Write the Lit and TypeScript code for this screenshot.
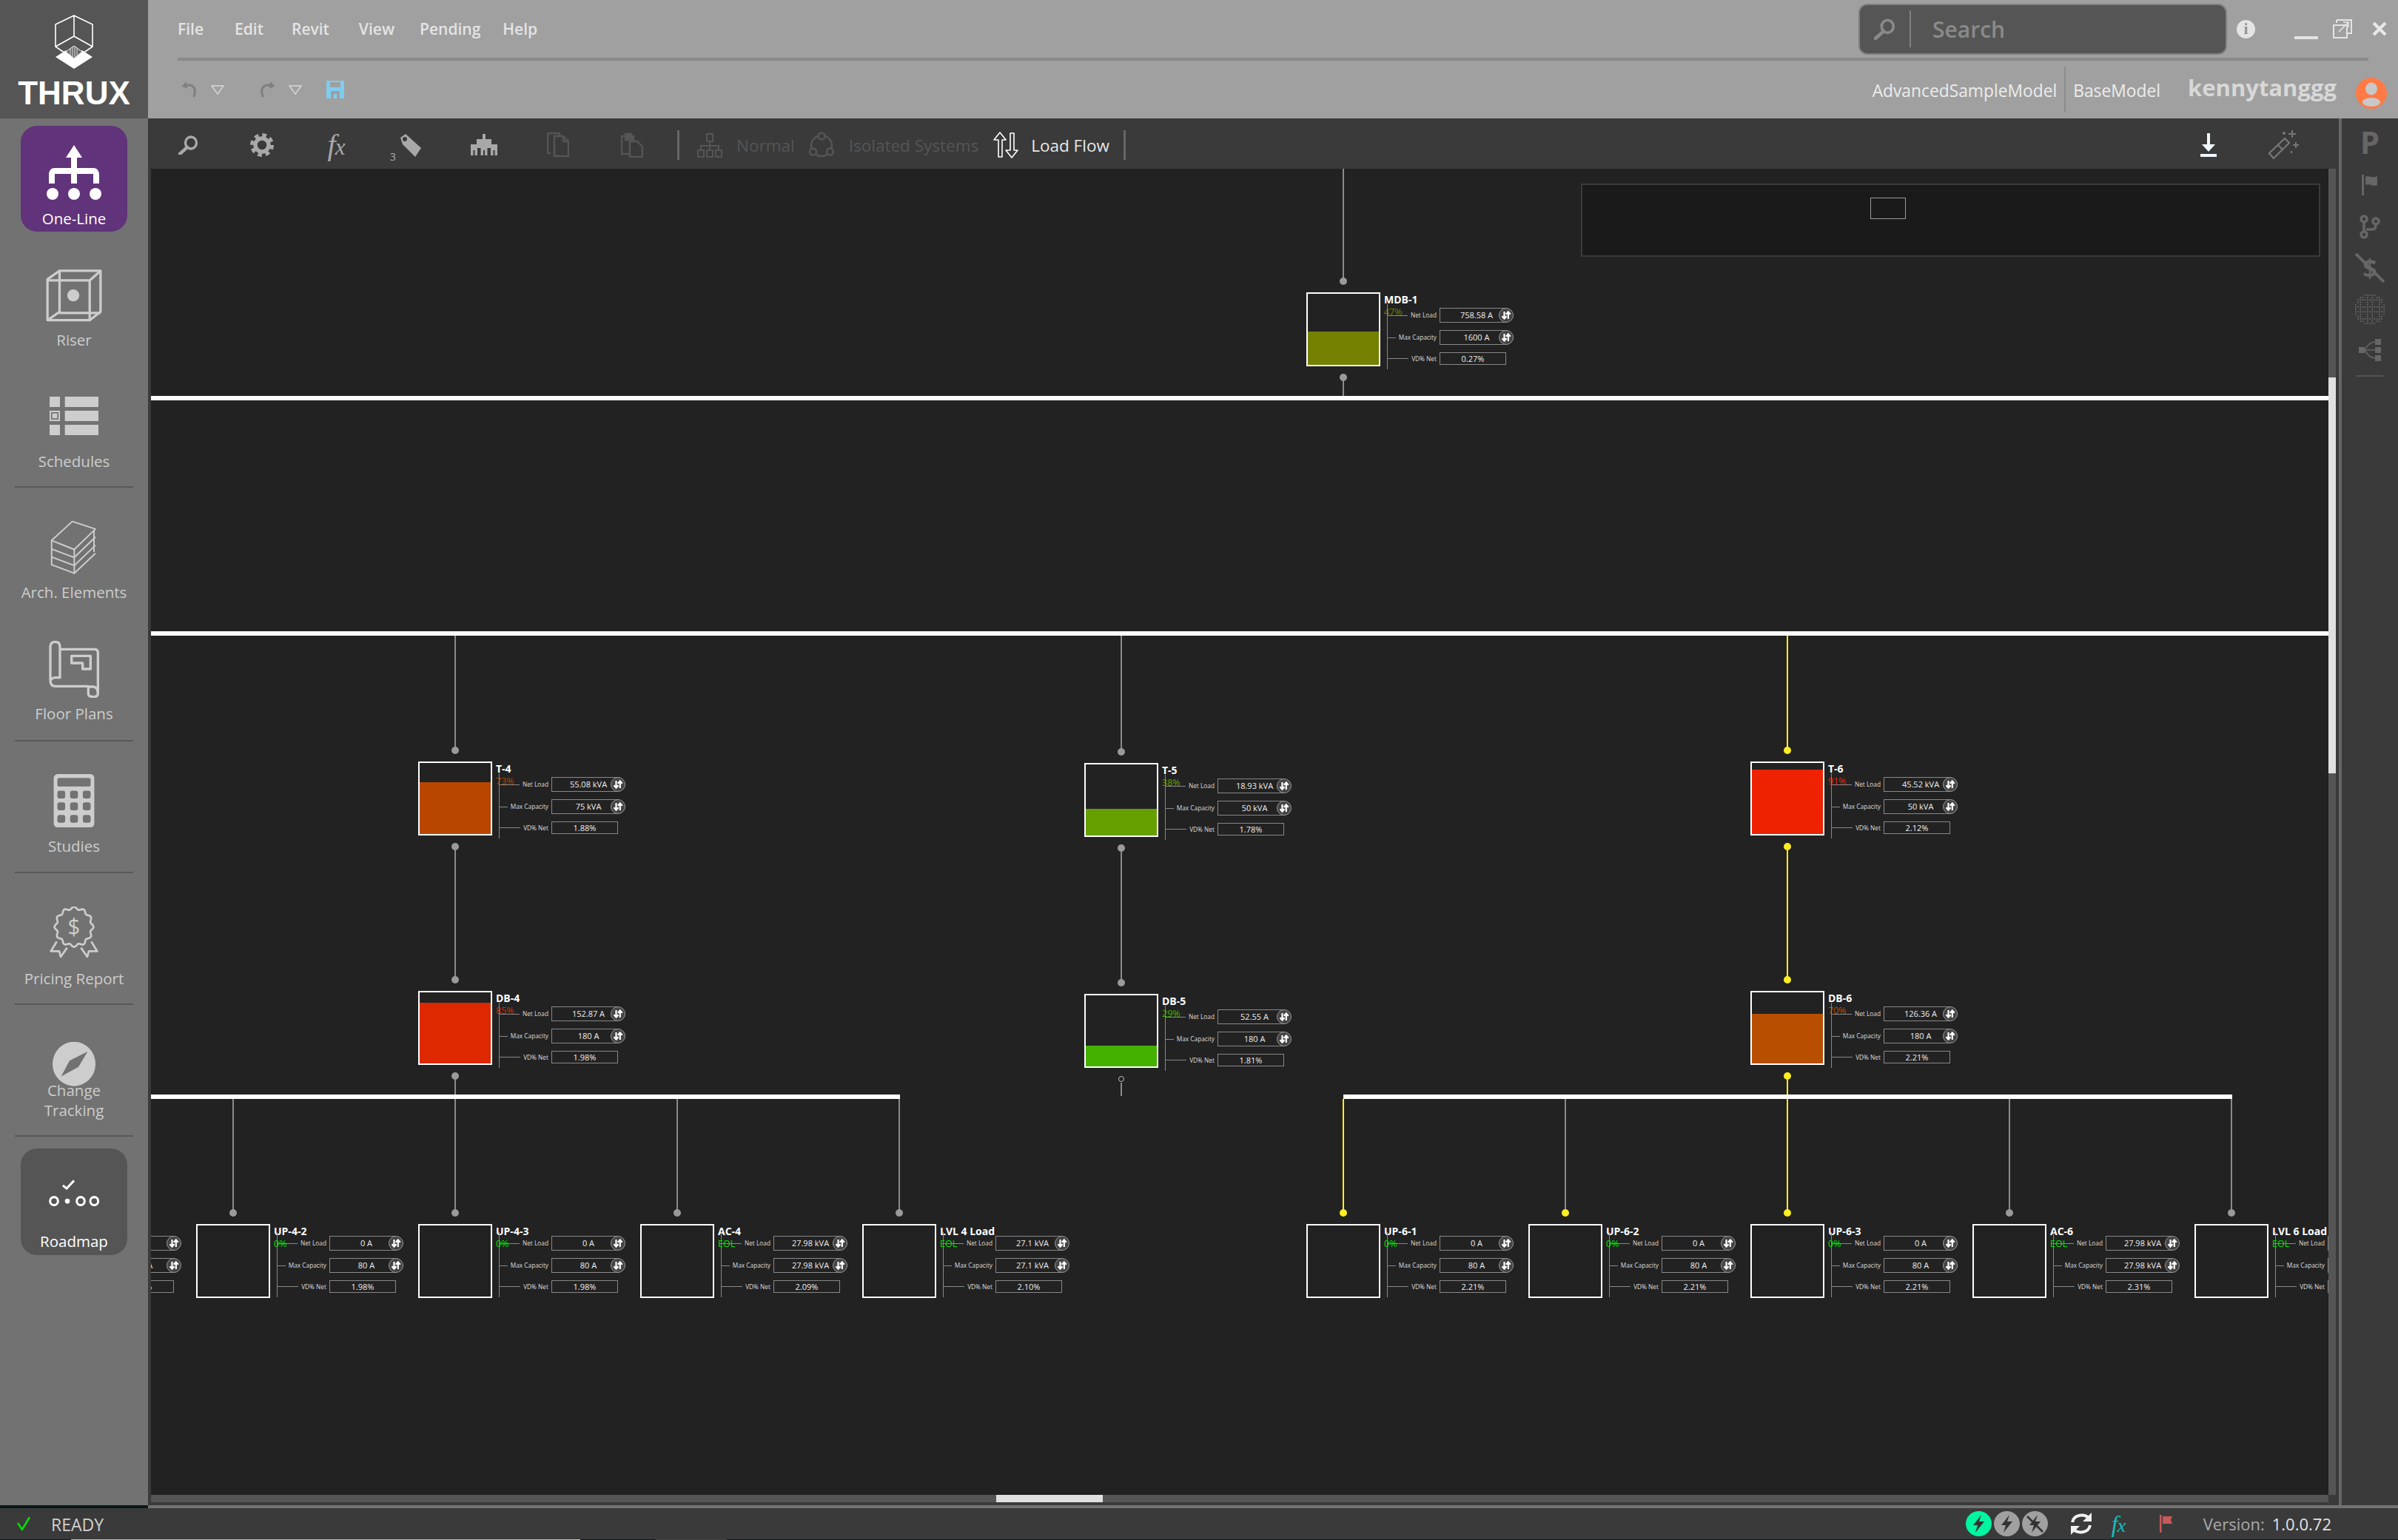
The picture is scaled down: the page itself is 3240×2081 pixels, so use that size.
import { LitElement, html, css, svg } from "lit";
import { customElement } from "lit/decorators.js";

const OX = 204;
const OY = 228;
const GRAY = "#8a8a8a";
const YEL = "#ffee22";
const LIME = "#00e000";

interface N { t: string; p: string; x: number; y: number; c: string; f: number; r: [string, string, string]; }

const up = (t: string, x: number, vd: string): N => ({ t, p: "0%", x, y: 1654, c: LIME, f: 0, r: ["0 A", "80 A", vd] });
const eol = (t: string, x: number, a: string, vd: string): N => ({ t, p: "EOL", x, y: 1654, c: LIME, f: 0, r: [a, a, vd] });

const NODES: N[] = [
  { t: "MDB-1", p: "47%", x: 1815, y: 395, c: "#738000", f: 47, r: ["758.58 A", "1600 A", "0.27%"] },
  { t: "T-4", p: "73%", x: 615, y: 1029, c: "#b84600", f: 73, r: ["55.08 kVA", "75 kVA", "1.88%"] },
  { t: "T-5", p: "38%", x: 1515, y: 1031, c: "#66a000", f: 38, r: ["18.93 kVA", "50 kVA", "1.78%"] },
  { t: "T-6", p: "91%", x: 2415, y: 1029, c: "#ee2200", f: 91, r: ["45.52 kVA", "50 kVA", "2.12%"] },
  { t: "DB-4", p: "85%", x: 615, y: 1339, c: "#dd2800", f: 85, r: ["152.87 A", "180 A", "1.98%"] },
  { t: "DB-5", p: "29%", x: 1515, y: 1343, c: "#44b000", f: 29, r: ["52.55 A", "180 A", "1.81%"] },
  { t: "DB-6", p: "70%", x: 2415, y: 1339, c: "#b84e00", f: 70, r: ["126.36 A", "180 A", "2.21%"] },
  up("UP-4-1", 15, "1.98%"),
  up("UP-4-2", 315, "1.98%"),
  up("UP-4-3", 615, "1.98%"),
  eol("AC-4", 915, "27.98 kVA", "2.09%"),
  eol("LVL 4 Load", 1215, "27.1 kVA", "2.10%"),
  up("UP-6-1", 1815, "2.21%"),
  up("UP-6-2", 2115, "2.21%"),
  up("UP-6-3", 2415, "2.21%"),
  eol("AC-6", 2715, "27.98 kVA", "2.31%"),
  eol("LVL 6 Load", 3015, "27.1 kVA", "2.32%"),
];

const WIRES: [number, number, number, string][] = [
  [1815, 228, 380, GRAY],
  [1815, 510, 535, GRAY],
  [615, 859, 1014, GRAY],
  [1515, 859, 1016, GRAY],
  [2415, 859, 1014, YEL],
  [615, 1144, 1324, GRAY],
  [1515, 1146, 1328, GRAY],
  [2415, 1144, 1324, YEL],
  [615, 1454, 1479, GRAY],
  [2415, 1454, 1479, YEL],
  [1515, 1463, 1481, GRAY],
  [315, 1485, 1639, GRAY],
  [615, 1485, 1639, GRAY],
  [915, 1485, 1639, GRAY],
  [1215, 1485, 1639, GRAY],
  [1815, 1485, 1639, YEL],
  [2115, 1485, 1639, GRAY],
  [2415, 1485, 1639, YEL],
  [2715, 1485, 1639, GRAY],
  [3015, 1485, 1639, GRAY],
];

const DOTS: [number, number, string][] = [
  [1815, 380, "#9a9a9a"], [1815, 510, "#9a9a9a"],
  [615, 1014, "#9a9a9a"], [1515, 1016, "#9a9a9a"], [2415, 1014, YEL],
  [615, 1144, "#9a9a9a"], [1515, 1146, "#9a9a9a"], [2415, 1144, YEL],
  [615, 1324, "#9a9a9a"], [1515, 1328, "#9a9a9a"], [2415, 1324, YEL],
  [615, 1454, "#9a9a9a"], [2415, 1454, YEL],
  [315, 1639, "#9a9a9a"], [615, 1639, "#9a9a9a"], [915, 1639, "#9a9a9a"], [1215, 1639, "#9a9a9a"],
  [1815, 1639, YEL], [2115, 1639, YEL], [2415, 1639, YEL], [2715, 1639, "#9a9a9a"], [3015, 1639, "#9a9a9a"],
];

const BUSES: [number, number, number][] = [
  [204, 3146, 535],
  [204, 3146, 853],
  [204, 1216, 1479],
  [1815, 3016, 1479],
];

function wavy(cx: number, cy: number, r: number, a: number, lobes: number) {
  const pts: string[] = [];
  for (let i = 0; i < 180; i++) {
    const th = (i / 180) * Math.PI * 2;
    const rr = r + a * Math.cos(lobes * th);
    pts.push(`${(cx + rr * Math.sin(th)).toFixed(1)} ${(cy - rr * Math.cos(th)).toFixed(1)}`);
  }
  return "M" + pts.join("L") + "Z";
}

function gridDots() {
  const out = [];
  const lines = [2, 5, 7, 10];
  for (let i = 0; i < 13; i++) {
    for (let j = 0; j < 13; j++) {
      const dx = i - 6, dy = j - 6;
      const d = Math.sqrt(dx * dx + dy * dy);
      if (d > 6.6) continue;
      const onLine = lines.includes(i) || lines.includes(j) || d > 5.6;
      if (onLine) out.push(svg`<rect x=${i * 3.2} y=${j * 3.2} width="1.8" height="1.8"></rect>`);
    }
  }
  return out;
}

const swapIcon = html`<svg class="swap" viewBox="0 0 14 14" width="14" height="14" fill="none" stroke="#fff" stroke-width="2.2"><path d="M4.5 2v9M1.5 8.2l3 3.3 3-3.3"></path><path d="M9.8 12V3M6.8 5.8l3-3.3 3 3.3"></path></svg>`;

const zoomGlass = (c: string, w: number, h: number) => html`<svg viewBox="0 0 28 26" width=${w} height=${h} fill="none" stroke=${c} stroke-width="3.4"><ellipse cx="18" cy="10" rx="7.5" ry="8"></ellipse><path d="M13 16L3 25" stroke-width="4.4" stroke-linecap="round"></path></svg>`;

@customElement("app-root")
export class AppRoot extends LitElement {
  static styles = css`
    :host { display: block; width: 3240px; height: 2081px; font-family: "Open Sans", "Noto Sans", sans-serif; overflow: hidden; background: #0a1a1a; }
    svg { display: block; flex: none; }
    .app { display: flex; flex-direction: column; width: 3240px; height: 2081px; }

    /* header */
    .header { display: flex; height: 160px; flex: none; }
    .logo { width: 200px; background: #555; display: flex; flex-direction: column; align-items: center; padding-top: 19px; box-sizing: border-box; }
    .logo-text { font-family: "Liberation Sans", sans-serif; font-weight: 700; font-size: 44px; line-height: 32px; color: #fff; margin-top: 15px; letter-spacing: 0; }
    .top { flex: 1; background: #a0a0a0; display: flex; flex-direction: column; padding: 0 40px; box-sizing: border-box; }
    .row1 { height: 78px; display: flex; align-items: center; flex: none; margin-right: -25px; }
    .menu { display: flex; font-size: 21px; font-weight: 600; color: #e4e4e4; }
    .menu span:nth-child(1) { margin-right: 42px; }
    .menu span:nth-child(2) { margin-right: 38px; }
    .menu span:nth-child(3) { margin-right: 40px; }
    .menu span:nth-child(4) { margin-right: 34px; }
    .menu span:nth-child(5) { margin-right: 30px; }
    .search { margin-left: auto; width: 498px; height: 69px; margin-right: 13px; box-sizing: border-box; border: 2px solid #808080; border-radius: 12px; background: #555; display: flex; align-items: center; padding-left: 18px; margin-top: 0; }
    .search .sep { width: 2px; height: 50px; background: #808080; margin-left: 19px; margin-right: 29px; }
    .search .txt { font-size: 30px; font-weight: 600; color: #8a8a8a; }
    .info-i { width: 25px; height: 25px; border-radius: 50%; background: #e4e4e4; color: #909090; font: 700 20px/25px "Liberation Serif", serif; text-align: center; margin-right: 53px; }
    .min { width: 32px; height: 4px; background: #e4e4e4; margin-top: 24px; margin-right: 20px; }
    .rest { margin-right: 27px; margin-top: 0; }
    .divider { height: 4px; background: #8a8a8a; flex: none; }
    .row2 { flex: 1; display: flex; align-items: flex-start; position: relative; }
    .undo { display: flex; align-items: center; margin-top: 27px; margin-left: 3px; }
    .tri { margin-left: 15px; }
    .redo { margin-left: 44px; }
    .save { margin-left: 32px; }
    .models { margin-left: auto; display: flex; align-items: center; height: 62px; margin-top: 8px; font-size: 22.8px; color: #ececec; }
    .models .bar { width: 2px; height: 62px; background: #8c8c8c; margin: 0 10px; }
    .models .nm { padding-bottom: 0; line-height: 34px; margin-top: 4px; }
    .user { font-size: 31px; font-weight: 700; color: #d8d8d8; margin: 0 26px 0 37px; line-height: 40px; padding-bottom: 6px; }
    .avatar { margin-right: -25px; margin-top: 10px; }

    /* main */
    .main { flex: 1; display: flex; min-height: 0; }
    .side { width: 200px; background: #727272; display: flex; flex-direction: column; align-items: center; flex: none; color: #cdcdcd; }
    .item { width: 100%; display: flex; flex-direction: column; align-items: center; box-sizing: border-box; flex: none; }
    .lbl { font-size: 20.5px; line-height: 30px; white-space: nowrap; text-align: center; }
    .rule { width: 160px; height: 2px; background: #585858; flex: none; }
    .tile { width: 144px; border-radius: 22px; color: #fff; }
    .n-one { background: #60337a; margin-top: 10px; height: 143px; padding-top: 26px; }
    .n-one .lbl { margin-top: 10px; }
    .n-riser { padding-top: 50px; } .n-riser .lbl { margin-top: 8px; }
    .n-sched { padding-top: 62px; } .n-sched .lbl { margin-top: 20px; }
    .r1 { margin-top: 19px; }
    .n-arch { padding-top: 44px; } .n-arch .lbl { margin-top: 9px; }
    .n-floor { padding-top: 50px; } .n-floor .lbl { margin-top: 6px; }
    .r2 { margin-top: 21px; }
    .n-stud { padding-top: 44px; } .n-stud .lbl { margin-top: 10px; }
    .r3 { margin-top: 20px; }
    .n-price { padding-top: 45px; } .n-price .lbl { margin-top: 11.5px; }
    .r4 { margin-top: 19.5px; }
    .n-change { padding-top: 50px; } .n-change .lbl { margin-top: -8.5px; line-height: 27px; }
    .r5 { margin-top: 20.5px; }
    .n-road { background: #555; margin-top: 15.5px; height: 144px; padding-top: 42.5px; }
    .n-road .lbl { margin-top: 28px; }

    .center { width: 2960px; flex: none; background: #3a3a3a; display: flex; flex-direction: column; }
    .toolbar { height: 68px; flex: none; display: flex; align-items: center; padding-left: 4px; padding-right: 54px; padding-top: 4px; box-sizing: border-box; color: #555; font-size: 22.5px; }
    .cell { width: 100px; height: 64px; display: flex; align-items: center; justify-content: center; position: relative; flex: none; }
    .fx { font: italic 40px/1 "Liberation Serif", serif; color: #a8a8a8; letter-spacing: -1px; }
    .fx .sx { font-size: 31px; }
    .tag3 { position: absolute; left: 23px; bottom: 9px; font-size: 14px; line-height: 14px; color: #aaa; }
    .vsep { width: 3px; height: 40px; background: #666; flex: none; }
    .vs1 { margin-left: 11px; margin-right: 24px; }
    .t1 { margin-left: 19px; margin-right: 19px; }
    .t2 { margin-left: 20px; margin-right: 19px; }
    .t3 { margin-left: 16px; margin-right: 19px; color: #e8e8e8; }
    .dl { margin-left: auto; margin-right: 69px; }

    .mid { flex: 1; display: flex; padding-left: 4px; min-height: 0; }
    .canvas { width: 2942px; flex: none; background: #222; position: relative; overflow: hidden; }
    .vtrack { width: 10px; flex: none; background: #555; padding-top: 282px; box-sizing: border-box; }
    .vthumb { height: 535px; background: #e0e0e0; }
    .htrack { height: 10px; margin-left: 4px; width: 2942px; background: #555; flex: none; padding-left: 1142px; box-sizing: border-box; }
    .hthumb { width: 144px; height: 10px; background: #e0e0e0; }
    .hgap { height: 4px; flex: none; }

    .panel { flex: 1; border-left: 4px solid #666; background: #3a3a3a; display: flex; flex-direction: column; align-items: center; color: #666; box-sizing: border-box; }
    .p { font: 700 42px/40px "Open Sans", sans-serif; height: 40px; margin-top: 12px; margin-left: 0; }
    .nodollar { position: relative; width: 40px; height: 40px; display: flex; align-items: center; justify-content: center; font: 700 34px/40px "Open Sans", sans-serif; margin-top: 19px; }
    .nodollar svg { position: absolute; left: 0; top: 0; }
    .pf { margin-top: 24px; }
    .pb { margin-top: 26px; }
    .pg { margin-top: 16px; }
    .pt { margin-top: 20px; }
    .pr { width: 36px; height: 2px; background: #555; margin-top: 19px; }

    .hline { height: 4px; background: #727272; margin-left: 200px; flex: none; }

    /* status */
    .status { height: 42px; flex: none; background: #3a3a3a; display: flex; align-items: center; padding-left: 21px; font-size: 22px; color: #d0d0d0; }
    .ready { margin-left: 26px; font-size: 23px; padding-top: 2px; }
    .bolts { margin-left: auto; display: flex; gap: 3px; }
    .sync { margin-left: 30px; }
    .sfx { font: italic 32px/1 "Liberation Serif", serif; color: #10c0c0; margin-left: 26px; width: 24px; letter-spacing: -1px; }
    .sfx .sx { font-size: 26px; }
    .sflag { margin-left: 41px; }
    .ver { margin-left: 41px; color: #aaa; }
    .ver b { font-weight: 400; color: #e4e4e4; margin-left: 10px; }
    .endgap { width: 90px; flex: none; }
    .foot { height: 1px; flex: none; display: flex; }
    .f1 { width: 96px; } .f2 { width: 688px; background: #bbb; } .f3 { width: 102px; } .f4 { width: 96px; background: #444; }

    /* diagram */
    .bus { position: absolute; height: 6px; background: #fff; }
    .wire { position: absolute; width: 2px; }
    .dot { position: absolute; width: 10px; height: 10px; border-radius: 50%; }
    .ring { position: absolute; width: 8px; height: 8px; border-radius: 50%; border: 1px solid #bbb; box-sizing: border-box; }
    .mini { position: absolute; box-sizing: border-box; left: 1932px; top: 20px; width: 999px; height: 99px; background: #1a1a1a; border: 2px solid #3a3a3a; display: flex; justify-content: center; }
    .mini div { width: 48px; height: 29px; border: 1px solid #999; box-sizing: border-box; margin-top: 17px; margin-left: -170px; }
    .node { position: absolute; display: flex; width: 280px; height: 110px; color: #eee; }
    .box { width: 100px; height: 100px; box-sizing: border-box; border: 2px solid #fff; display: flex; align-items: flex-end; flex: none; background: #222; }
    .fill { width: 100%; }
    .info { position: relative; width: 180px; }
    .title { position: absolute; left: 5px; top: 2px; font-size: 14px; line-height: 16px; font-weight: 700; color: #fff; white-space: nowrap; }
    .pct { position: absolute; left: 5px; top: 19px; font-size: 12.5px; line-height: 16px; }
    .spine { position: absolute; left: 9px; top: 16px; width: 1px; height: 88px; background: #888; }
    .rows { position: absolute; left: 10px; top: 21px; width: 160px; display: flex; flex-direction: column; gap: 10px; }
    .low .rows { top: 16px; }
    .low .spine { top: 11px; }
    .row { display: flex; align-items: center; height: 20px; }
    .row.last { height: 17px; }
    .stub { flex: 1; height: 1px; background: #888; margin-right: 4px; }
    .rl { font-size: 8.3px; line-height: 10px; color: #ddd; white-space: nowrap; margin-right: 4px; }
    .val { width: 90px; height: 100%; flex: none; box-sizing: border-box; border: 1px solid #888; position: relative; font-size: 11px; line-height: 18px; text-align: center; background: #222; white-space: nowrap; }
    .row.last .val { line-height: 15px; }
    .val.btn { padding-left: 10px; }
    .circ { position: absolute; right: -11px; top: -1px; width: 20px; height: 20px; box-sizing: border-box; border: 1px solid #999; border-radius: 50%; background: #444; display: flex; align-items: center; justify-content: center; }
  `;

  private node(n: N) {
    const labels = ["Net Load", "Max Capacity", "VD% Net"];
    return html`<div class="node ${n.y === 1654 ? "low" : ""}" style="left:${n.x - 50 - OX}px;top:${n.y - OY}px">
      <div class="box">${n.f ? html`<div class="fill" style="height:${n.f}%;background:${n.c}"></div>` : ""}</div>
      <div class="info">
        <div class="title">${n.t}</div>
        <div class="pct" style="color:${n.c}">${n.p}</div>
        <div class="spine"></div>
        <div class="rows">
          ${labels.map((l, i) => html`<div class="row ${i === 2 ? "last" : ""}">
            <div class="stub"></div><div class="rl">${l}</div>
            <div class="val ${i < 2 ? "btn" : ""}">${n.r[i]}${i < 2 ? html`<div class="circ">${swapIcon}</div>` : ""}</div>
          </div>`)}
        </div>
      </div>
    </div>`;
  }

  render() {
    return html`<div class="app">
      <div class="header">
        <div class="logo">
          <svg width="60" height="76" viewBox="70 19 60 76">
            <path d="M100 21L125 33V63L100 80L75 63V33Z M100 21V50 M75 63L100 49L125 63" fill="none" stroke="#fff" stroke-width="1.6"></path>
            <path d="M75 77L89 68L100 80L111 68L125 77L100 93Z" fill="#fff"></path>
            <path d="M100 62L111 70L100 79L89 70Z" fill="#666" stroke="#fff" stroke-width="1"></path>
            <path d="M95 65V75M98 63V77M101 63V77M104 65V75" stroke="#ddd" stroke-width="1"></path>
          </svg>
          <div class="logo-text">THRUX</div>
        </div>
        <div class="top">
          <div class="row1">
            <div class="menu"><span>File</span><span>Edit</span><span>Revit</span><span>View</span><span>Pending</span><span>Help</span></div>
            <div class="search">
              ${zoomGlass("#8a8a8a", 30, 32)}
              <div class="sep"></div>
              <div class="txt">Search</div>
            </div>
            <div class="info-i">i</div>
            <div class="min"></div>
            <svg class="rest" viewBox="0 0 26 26" width="26" height="26" fill="none" stroke="#e4e4e4" stroke-width="2"><path d="M5 1H25V19H20"></path><path d="M5 1V5" ></path><rect x="1" y="8" width="18" height="17"></rect><path d="M8 17L21 4M14 4H21V11" stroke-width="1.6"></path></svg>
            <svg viewBox="0 0 20 20" width="20" height="20" fill="none" stroke="#e8e8e8" stroke-width="4.2"><path d="M2 2L18 18M18 2L2 18"></path></svg>
          </div>
          <div class="divider"></div>
          <div class="row2">
            <div class="undo">
              <svg viewBox="0 0 26 26" width="26" height="24" fill="none" stroke="#808080" stroke-width="3.4"><path d="M4 8C14 4 21 8 21 15C21 19 20 22 19 24"></path><path d="M8 1L2 8L10 12" fill="#808080" stroke="none"></path></svg>
              <svg class="tri" viewBox="0 0 20 14" width="20" height="13" fill="none" stroke="#d8d8d8" stroke-width="1.6"><path d="M1.5 1H18.5L10 13Z"></path></svg>
              <svg class="redo" viewBox="0 0 26 26" width="26" height="24" fill="none" stroke="#808080" stroke-width="3.4"><path d="M22 8C12 4 5 8 5 15C5 19 6 22 7 24"></path><path d="M18 1L24 8L16 12" fill="#808080" stroke="none"></path></svg>
              <svg class="tri" viewBox="0 0 20 14" width="20" height="13" fill="none" stroke="#d8d8d8" stroke-width="1.6"><path d="M1.5 1H18.5L10 13Z"></path></svg>
              <svg class="save" viewBox="0 0 24 24" width="24" height="24"><path d="M0 0H24V24H0Z" fill="#7ecdf0"></path><rect x="5" y="2" width="14" height="7" fill="#a0a0a0"></rect><rect x="6" y="14" width="12" height="10" fill="#a0a0a0"></rect><rect x="10" y="18" width="4" height="6" fill="#7ecdf0"></rect></svg>
            </div>
            <div class="models">
              <div class="nm">AdvancedSampleModel</div><div class="bar"></div><div class="nm">BaseModel</div>
              <div class="user">kennytanggg</div>
              <svg class="avatar" viewBox="0 0 42 42" width="42" height="42"><circle cx="21" cy="21" r="21" fill="#ff7a45"></circle><ellipse cx="21" cy="15" rx="8" ry="8.5" fill="#c8c8c8"></ellipse><ellipse cx="21" cy="33" rx="12" ry="6" fill="#c8c8c8"></ellipse></svg>
            </div>
          </div>
        </div>
      </div>

      <div class="main">
        <nav class="side">
          <div class="item tile n-one">
            <svg width="76" height="74" viewBox="62 196 76 74" fill="#fff">
              <path d="M100 196L111 213H104V227H126C132 227 134 232 134 236V248H126V235H104V248H96V235H74V248H66V236C66 232 68 227 74 227H96V213H89Z"></path>
              <circle cx="71" cy="262" r="8"></circle><circle cx="100" cy="262" r="8"></circle><circle cx="129" cy="262" r="8"></circle>
            </svg>
            <div class="lbl">One-Line</div>
          </div>
          <div class="item n-riser">
            <svg width="80" height="73" viewBox="190 636 240 224" fill="none" stroke="#cdcdcd" stroke-width="10" stroke-linejoin="round">
              <path d="M200 680L250 645H420V815L375 850H200Z"></path>
              <path d="M200 685H375V850M375 685L420 645M250 645V820H420M200 850L250 815"></path>
              <circle cx="307" cy="747" r="25" fill="#cdcdcd" stroke="none"></circle>
            </svg>
            <div class="lbl">Riser</div>
          </div>
          <div class="item n-sched">
            <svg width="70" height="52" viewBox="195 1158 210 156" fill="#cdcdcd">
              <rect x="201" y="1158" width="42" height="42"></rect><rect x="263" y="1158" width="136" height="42"></rect>
              <rect x="204" y="1218" width="36" height="36" fill="none" stroke="#cdcdcd" stroke-width="6"></rect><rect x="212" y="1226" width="20" height="20"></rect><rect x="263" y="1215" width="136" height="42"></rect>
              <rect x="201" y="1272" width="42" height="42"></rect><rect x="263" y="1272" width="136" height="42"></rect>
            </svg>
            <div class="lbl">Schedules</div>
          </div>
          <div class="rule r1"></div>
          <div class="item n-arch">
            <svg width="66" height="73" viewBox="203 97 198 222" fill="none" stroke="#cdcdcd" stroke-width="6" stroke-linejoin="round">
              <path d="M210 180L295 102L390 133L303 217Z"></path>
              <path d="M210 180V280L303 315V217M210 215L303 250M210 248L303 283"></path>
              <path d="M303 250L390 166M303 283L390 200M303 315L390 233M384 140V228"></path>
            </svg>
            <div class="lbl">Arch. Elements</div>
          </div>
          <div class="item n-floor">
            <svg width="72" height="78" viewBox="192 583 216 234" fill="none" stroke="#cdcdcd" stroke-width="10" stroke-linejoin="round">
              <path d="M245 620H385Q397 620 397 635V800Q397 813 378 813Q358 813 358 800V770H225Q204 770 204 745V610Q204 590 224 590Q243 590 243 610V735H225Q208 735 204 750"></path>
              <path d="M358 772H380Q397 775 397 800"></path>
              <path d="M290 647H367V700H335V676H290Z"></path>
            </svg>
            <div class="lbl">Floor Plans</div>
          </div>
          <div class="rule r2"></div>
          <div class="item n-stud">
            <svg width="56" height="72" viewBox="217 1127 166 218">
              <rect x="217" y="1127" width="166" height="218" rx="16" fill="#cdcdcd"></rect>
              <rect x="232" y="1143" width="136" height="35" rx="8" fill="#727272"></rect>
              ${[1195, 1243, 1294].map((y) => [232, 284, 336].map((x) => svg`<rect x=${x} y=${y} width="32" height="32" rx="9" fill="#727272"></rect>`))}
            </svg>
            <div class="lbl">Studies</div>
          </div>
          <div class="rule r3"></div>
          <div class="item n-price">
            <svg width="68" height="70" viewBox="198 160 204 204" preserveAspectRatio="none" fill="none" stroke="#cdcdcd" stroke-width="8" stroke-linejoin="round">
              <path d="${wavy(300, 240, 74, 5, 12)}"></path>
              <path d="M230 298L206 336L240 336L246 358L272 322M370 298L394 336L360 336L354 358L328 322"></path>
              <text x="300" y="272" font-size="88" font-weight="400" font-family="Open Sans, sans-serif" text-anchor="middle" fill="#cdcdcd" stroke="none">$</text>
            </svg>
            <div class="lbl">Pricing Report</div>
          </div>
          <div class="rule r4"></div>
          <div class="item n-change">
            <svg width="60" height="60" viewBox="210 692 180 174" preserveAspectRatio="none">
              <circle cx="300" cy="778" r="87" fill="#cdcdcd"></circle>
              <path d="M355 730L318 790L248 827L282 765Z" fill="#727272"></path>
            </svg>
            <div class="lbl">Change<br />Tracking</div>
          </div>
          <div class="rule r5"></div>
          <div class="item tile n-road">
            <svg width="72" height="40" viewBox="192 1232 216 117" preserveAspectRatio="none" fill="none" stroke="#fff" stroke-width="9">
              <path d="M255 1255L270 1267L300 1236"></path>
              <circle cx="219" cy="1317" r="16"></circle>
              <circle cx="273" cy="1317" r="10" fill="#fff" stroke="none"></circle>
              <circle cx="327" cy="1317" r="16"></circle>
              <circle cx="382" cy="1317" r="16"></circle>
            </svg>
            <div class="lbl">Roadmap</div>
          </div>
        </nav>

        <div class="center">
          <div class="toolbar">
            <div class="cell">${zoomGlass("#a8a8a8", 28, 26)}</div>
            <div class="cell">
              <svg viewBox="0 0 32 32" width="32" height="32" fill="none" stroke="#a8a8a8"><circle cx="16" cy="16" r="9" stroke-width="5.5"></circle><circle cx="16" cy="16" r="13.5" stroke-width="5" stroke-dasharray="5.6 5"></circle></svg>
            </div>
            <div class="cell"><span class="fx">f<span class="sx">x</span></span></div>
            <div class="cell">
              <svg viewBox="0 0 32 32" width="32" height="32"><path d="M3 6L10 1L31 20L23 32L6 15Z" fill="#a8a8a8"></path><circle cx="9" cy="8" r="3" fill="#3a3a3a"></circle></svg>
              <span class="tag3">3</span>
            </div>
            <div class="cell">
              <svg viewBox="0 0 36 30" width="36" height="30" fill="#a8a8a8"><rect x="16" y="0" width="4" height="8"></rect><rect x="8" y="7" width="20" height="7"></rect><rect x="0" y="14" width="36" height="5"></rect><rect x="0" y="18" width="9" height="11"></rect><rect x="13.500" y="18" width="9" height="11"></rect><rect x="27" y="18" width="9" height="11"></rect><rect x="3.500" y="22" width="2" height="7" fill="#3a3a3a"></rect><rect x="17" y="22" width="2" height="7" fill="#3a3a3a"></rect><rect x="30.500" y="22" width="2" height="7" fill="#3a3a3a"></rect></svg>
            </div>
            <div class="cell">
              <svg viewBox="0 0 30 34" width="30" height="34" fill="none" stroke="#555" stroke-width="2.4"><path d="M10 5V32H29V12L22 5Z"></path><path d="M5 28H1V1H17V5"></path><path d="M22 5V12H29"></path></svg>
            </div>
            <div class="cell">
              <svg viewBox="0 0 30 34" width="30" height="34" fill="none" stroke="#555" stroke-width="2.4"><path d="M6 5H1V29H12"></path><path d="M6 5V2H14V5H17V10H6Z" fill="#555"></path><path d="M12 12H22L29 19V33H12Z"></path></svg>
            </div>
            <div class="vsep vs1"></div>
            <svg viewBox="0 0 34 33" width="34" height="33" fill="none" stroke="#555" stroke-width="2"><rect x="13" y="1" width="8" height="10"></rect><path d="M17 11V23M5 23V17H29V23"></path><rect x="1" y="23" width="8" height="9"></rect><rect x="13" y="23" width="8" height="9"></rect><rect x="25" y="23" width="8" height="9"></rect></svg>
            <span class="t1">Normal</span>
            <svg viewBox="0 0 34 36" width="34" height="36" fill="none" stroke="#555" stroke-width="2.6"><circle cx="17" cy="19" r="14"></circle><circle cx="17" cy="6" r="4.5" fill="#3a3a3a"></circle><circle cx="5.500" cy="27" r="4.500" fill="#3a3a3a"></circle><circle cx="28.500" cy="27" r="4.500" fill="#3a3a3a"></circle></svg>
            <span class="t2">Isolated Systems</span>
            <svg viewBox="0 0 36 36" width="36" height="36" fill="none" stroke="#fff" stroke-width="1.6" stroke-linejoin="round"><path d="M10 1L18 11H13V34H8V11H2Z"></path><path d="M26 35L34 25H29V2H24V25H18Z"></path></svg>
            <span class="t3">Load Flow</span>
            <div class="vsep"></div>
            <svg class="dl" viewBox="0 0 22 32" width="22" height="32" fill="#f0f8ff"><path d="M9 0H13V15H20L11 25L2 15H9Z"></path><rect x="0" y="28" width="22" height="4"></rect></svg>
            <svg viewBox="0 0 42 40" width="42" height="40" fill="none" stroke="#777" stroke-width="2.2"><path d="M2 31L23 11L29 17L8 38Z"></path><path d="M14 20L20 26"></path><path d="M33 0V10M28 5H38M38 16V24M34 20H42M22 2V6M20 4H24M32 28V31" stroke-width="2"></path></svg>
          </div>
          <div class="mid">
            <div class="canvas">
              <div class="mini"><div></div></div>
              ${BUSES.map(([a, b, y]) => html`<div class="bus" style="left:${a - OX}px;top:${y - OY}px;width:${b - a}px"></div>`)}
              ${WIRES.map(([x, a, b, c]) => html`<div class="wire" style="left:${x - 1 - OX}px;top:${a - OY}px;height:${b - a}px;background:${c}"></div>`)}
              ${DOTS.map(([x, y, c]) => html`<div class="dot" style="left:${x - 5 - OX}px;top:${y - 5 - OY}px;background:${c}"></div>`)}
              <div class="ring" style="left:${1515 - 4 - OX}px;top:${1458 - 4 - OY}px"></div>
              ${NODES.map((n) => this.node(n))}
            </div>
            <div class="vtrack"><div class="vthumb"></div></div>
          </div>
          <div class="htrack"><div class="hthumb"></div></div>
          <div class="hgap"></div>
        </div>

        <aside class="panel">
          <div class="p">P</div>
          <svg class="pf" viewBox="0 0 22 28" width="22" height="28" fill="#666"><rect x="0" y="0" width="3" height="28"></rect><path d="M5 3C9 0 14 6 21 2V14C15 17 10 11 5 14Z"></path></svg>
          <svg class="pb" viewBox="0 0 28 33" width="28" height="33" fill="none" stroke="#666" stroke-width="3.6"><circle cx="6" cy="6" r="4"></circle><circle cx="6" cy="27" r="4"></circle><circle cx="22" cy="9" r="4"></circle><path d="M6 10V23M9 20H18Q22 20 22 13"></path></svg>
          <div class="nodollar">$<svg viewBox="0 0 40 40" width="40" height="40" stroke="#666" stroke-width="4"><path d="M1 1L39 39"></path></svg></div>
          <svg class="pg" viewBox="0 0 40 40" width="40" height="40" fill="#666">${gridDots()}</svg>
          <svg class="pt" viewBox="0 0 30 30" width="30" height="30" fill="#666" stroke="none"><rect x="0" y="11" width="8" height="8"></rect><rect x="22" y="0" width="8" height="8"></rect><rect x="22" y="11" width="8" height="8"></rect><rect x="22" y="22" width="8" height="8"></rect><path d="M8 15H22M8 15Q14 4 22 4M8 15Q14 26 22 26" fill="none" stroke="#666" stroke-width="1.6"></path></svg>
          <div class="pr"></div>
        </aside>
      </div>

      <div class="hline"></div>

      <div class="status">
        <svg viewBox="0 0 22 18" width="22" height="18" fill="none" stroke="${LIME}" stroke-width="2.6"><path d="M3 8L9 17L19 0"></path></svg>
        <span class="ready">READY</span>
        <div class="bolts">
          <svg viewBox="0 0 35 34" width="35" height="34"><ellipse cx="17.500" cy="17" rx="17.500" ry="17" fill="#00f5a0"></ellipse><path d="M21 5L10 19H16L13 29L25 14H18Z" fill="#333"></path></svg>
          <svg viewBox="0 0 35 34" width="35" height="34"><ellipse cx="17.500" cy="17" rx="17.500" ry="17" fill="#a0a0a0"></ellipse><path d="M21 5L10 19H16L13 29L25 14H18Z" fill="#333"></path></svg>
          <svg viewBox="0 0 35 34" width="35" height="34"><ellipse cx="17.500" cy="17" rx="17.500" ry="17" fill="#a0a0a0"></ellipse><path d="M21 5L10 19H16L13 29L25 14H18Z" fill="#333"></path><path d="M7 7L28 28" stroke="#333" stroke-width="2.6"></path></svg>
        </div>
        <svg class="sync" viewBox="0 0 30 32" width="30" height="32" fill="none" stroke="#f0f0f0" stroke-width="4"><path d="M3 14C5 3 20 2 26 9"></path><path d="M27 18C25 29 10 30 4 23"></path><path d="M29 1V13H17Z" fill="#f0f0f0" stroke="none"></path><path d="M1 31V19H13Z" fill="#f0f0f0" stroke="none"></path></svg>
        <span class="sfx">f<span class="sx">x</span></span>
        <svg class="sflag" viewBox="0 0 18 24" width="18" height="24" fill="#c85a5a"><rect x="0" y="0" width="2.500" height="24"></rect><path d="M4 2H17L15 7L17 12H4Z"></path></svg>
        <span class="ver">Version:<b>1.0.0.72</b></span>
        <div class="endgap"></div>
      </div>
      <div class="foot"><div class="f1"></div><div class="f2"></div><div class="f3"></div><div class="f4"></div></div>
    </div>`;
  }
}
